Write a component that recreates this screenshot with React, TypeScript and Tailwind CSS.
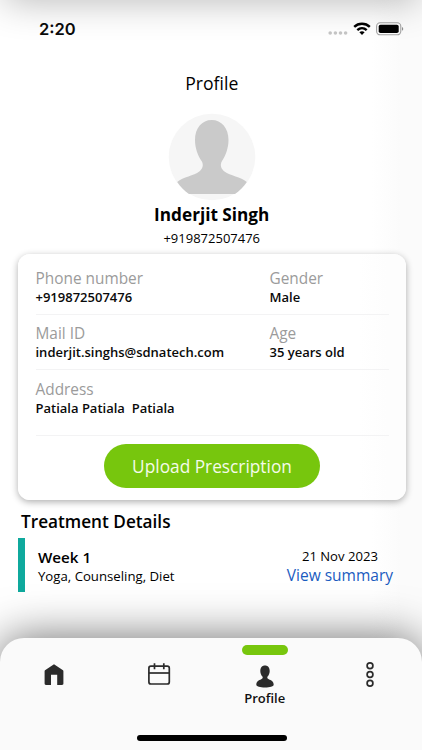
import type { ReactNode } from "react";

interface FieldProps {
  label: string;
  value: string;
}

const TABS = ["home", "calendar", "profile", "more"] as const;

function Field({ label, value }: FieldProps) {
  return (
    <div>
      <p className="pt-px text-[15.4px] leading-[19px] text-[#9b9b9b]">{label}</p>
      <p className="text-[13px] font-[550] leading-[18px] whitespace-pre text-[#0a0a0a]">{value}</p>
    </div>
  );
}

function Row({ className, children }: { className: string; children: ReactNode }) {
  return <div className={`grid grid-cols-[234px_1fr] border-b border-[#f3f3f4] ${className}`}>{children}</div>;
}

function StatusBar() {
  return (
    <header className="flex h-[57px] items-center justify-between pl-[39px] pr-[18px]">
      <span className="pt-[2px] font-[Inter,sans-serif] text-[16.5px] font-semibold leading-none text-[#0b0b0b]">2:20</span>
      <div className="flex items-center">
        <svg width="20" height="6" viewBox="0 0 20 6" className="mt-2 mr-[5px]" fill="#c6c6c6">
          <circle cx="2.2" cy="3" r="1.8" />
          <circle cx="7.4" cy="3" r="1.8" />
          <circle cx="12.5" cy="3" r="1.8" />
          <circle cx="17.6" cy="3" r="1.8" />
        </svg>
        <svg width="18" height="13" viewBox="0 0 18 13" className="mr-[5px]" fill="none" stroke="#000" strokeWidth="2.4">
          <path d="M1.2 4.9C5.6.7 12.4.7 16.8 4.9" />
          <path d="M4.3 8.1c2.7-2.5 6.7-2.5 9.4 0" />
          <path d="M6.4 10.3c1.5-1.3 3.7-1.3 5.2 0L9 12.9z" fill="#000" stroke="none" />
        </svg>
        <svg width="28" height="14" viewBox="0 0 28 14">
          <rect x="0.6" y="0.8" width="24.2" height="12" rx="3.6" fill="none" stroke="#a3a3a3" strokeWidth="1.1" />
          <rect x="2.7" y="2.7" width="20" height="8.4" rx="1.8" />
          <path d="M26 4.9c1.7.6 1.7 3.2 0 3.8z" fill="#8f8f8f" />
        </svg>
      </div>
    </header>
  );
}

function Avatar() {
  return (
    <svg width="88" height="88" viewBox="0 0 88 88">
      <circle cx="44" cy="44" r="43.3" fill="#f6f6f6" />
      <path
        d="M43.7 7C53.5 7 60.5 15 60.5 27C60.5 35 57.5 43 54 48C51.6 52 53.2 56 56.5 58.5C62 62.5 73 64 78.8 69C76 73.5 71.5 78 67 80.9H21C16.5 78 12 73.5 9.2 69C15 64 26 62.5 31.3 58.5C34.5 56 36 52 33.6 48C30 43 27 35 27 27C27 15 34 7 43.7 7Z"
        fill="#cacaca"
      />
    </svg>
  );
}

function TabIcon({ name }: { name: (typeof TABS)[number] }) {
  switch (name) {
    case "home":
      return (
        <svg width="24" height="26" viewBox="0 0 24 26" fill="#2b2b2b">
          <path d="M12 2.2 21 8.2c.3.3.4.6.4 1V21.6c0 1-.5 1.4-1.4 1.4H15.2V12.8H9V23H4c-1 0-1.4-.5-1.4-1.4V9.2c0-.4.1-.7.4-1z" />
        </svg>
      );
    case "calendar":
      return (
        <svg width="24" height="26" viewBox="0 0 24 26" fill="none" stroke="#2b2b2b" strokeWidth="1.7">
          <rect x="1.9" y="4.2" width="20.4" height="17.8" rx="2" />
          <path d="M1.9 11h20.4" />
          <path d="M7.5 1.2v6M16.8 1.2v6" />
        </svg>
      );
    case "profile":
      return (
        <svg width="24" height="26" viewBox="0 0 24 26" fill="#2b2b2b">
          <path d="M12 3.6c3 0 4.7 2.2 4.7 5.3 0 2.4-1 4.6-2.3 5.9-.4 1.2.2 2 1.4 2.5 2.3 1 4.8 1.9 4.9 5.4 0 1.7-3.8 2.7-8.7 2.7s-8.7-1-8.7-2.7c.1-3.5 2.6-4.4 4.9-5.4 1.2-.5 1.8-1.3 1.4-2.5-1.3-1.3-2.3-3.5-2.3-5.9 0-3.1 1.7-5.3 4.7-5.3Z" />
        </svg>
      );
    case "more":
      return (
        <svg width="24" height="26" viewBox="0 0 24 26" fill="none" stroke="#2b2b2b" strokeWidth="1.7">
          <circle cx="12" cy="3.8" r="2.9" />
          <circle cx="12" cy="12.5" r="2.9" />
          <circle cx="12" cy="21.2" r="2.9" />
        </svg>
      );
  }
}

function TabBar() {
  return (
    <nav className="relative mt-[46px] h-[112px] rounded-t-[24px] bg-[#fafafa] shadow-[0_0_46px_rgba(0,0,0,0.58)]">
      <div className="-mr-px grid grid-cols-4 pl-px">
        {TABS.map((tab) => (
          <div key={tab} className="flex flex-col items-center">
            <span className={`mt-[7px] h-[10px] w-[46px] rounded-full ${tab === "profile" ? "bg-[#77c60d]" : ""}`} />
            <span className="mt-[6.5px]">
              <TabIcon name={tab} />
            </span>
            {tab === "profile" && (
              <span className="mt-px text-[13px] font-[550] leading-[18px] text-[#111]">Profile</span>
            )}
          </div>
        ))}
      </div>
      <div className="absolute bottom-[9.5px] left-[137px] h-[5.5px] w-[150px] rounded-full bg-black" />
    </nav>
  );
}

export default function App() {
  return (
    <div className="relative h-[750px] w-[422px] overflow-hidden bg-[linear-gradient(to_right,#fff_88%,#fbfbfb_95%)] font-['Open_Sans',sans-serif] text-black">
      <div className="absolute inset-x-1 -top-10 h-10 shadow-[0_0_38px_rgba(0,0,0,0.3)]" />
      <StatusBar />

      <section className="flex flex-col items-center pl-[1.5px]">
        <h1 className="mt-[14px] text-[17.6px] leading-6">Profile</h1>
        <div className="mt-[18px] flex h-[88px] w-full justify-center">
          <Avatar />
        </div>
        <h2 className="mt-[2px] text-[17.2px] font-bold leading-6">Inderjit Singh</h2>
        <p className="mt-[2px] text-[13px] leading-[18px]">+919872507476</p>
      </section>

      <section className="mt-[7px] ml-[18px] h-[246px] w-[388px] rounded-[12px] bg-[linear-gradient(to_right,#fff_88%,#fdfdfd_95%)] px-[17.5px] shadow-[0_2px_7px_rgba(0,0,0,0.32)]">
        <Row className="h-[61px] pt-[14px]">
          <Field label="Phone number" value="+919872507476" />
          <Field label="Gender" value="Male" />
        </Row>
        <Row className="h-[55px] pt-[8px]">
          <Field label="Mail ID" value="inderjit.singhs@sdnatech.com" />
          <Field label="Age" value="35 years old" />
        </Row>
        <Row className="h-[66px] pt-[9px]">
          <Field label="Address" value="Patiala Patiala  Patiala" />
        </Row>
        <button className="mx-auto mt-2 block h-[43.5px] w-[216.5px] rounded-full bg-[#77c60d] pt-[2px] text-[17.3px] text-[#f4fbe9]">
          Upload Prescription
        </button>
      </section>

      <section className="mt-[10px] pr-[29px] pl-[18px]">
        <h3 className="pl-[3px] text-[17.2px] font-[550] leading-6">Treatment Details</h3>
        <div className="mt-1 flex h-[54px] items-start justify-between border-l-[7px] border-[#0fa99d] pl-[13px]">
          <div className="pt-[9px]">
            <p className="text-[15.2px] font-[550] leading-5">Week 1</p>
            <p className="text-[13.2px] leading-[18px]">Yoga, Counseling, Diet</p>
          </div>
          <div className="pt-[9px] text-center">
            <p className="text-[13.1px] leading-[18px]">21 Nov 2023</p>
            <p className="text-[15.5px] leading-5 text-[#1a5bbf]">View summary</p>
          </div>
        </div>
      </section>

      <TabBar />
    </div>
  );
}
